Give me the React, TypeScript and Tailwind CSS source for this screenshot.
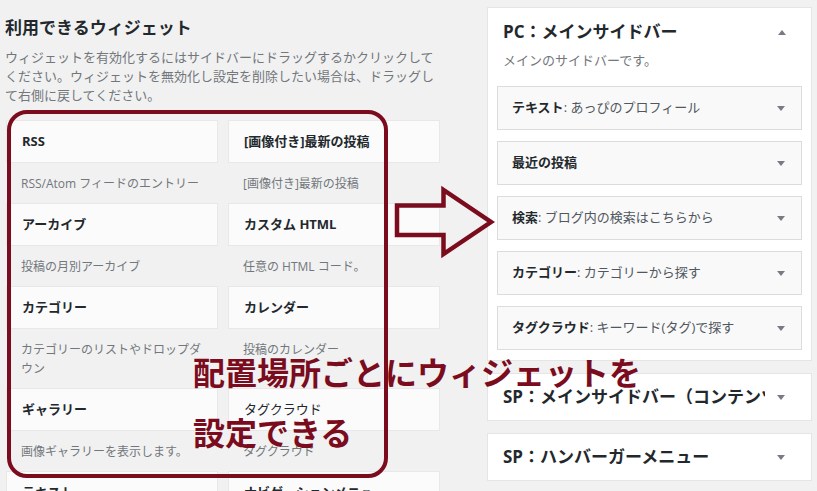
import React from "react";

type Widget = { title: string; desc: string[]; light?: boolean };

const widgets: Widget[] = [
  { title: "RSS", desc: ["RSS/Atom フィードのエントリー"] },
  { title: "[画像付き]最新の投稿", desc: ["[画像付き]最新の投稿"] },
  { title: "アーカイブ", desc: ["投稿の月別アーカイブ"] },
  { title: "カスタム HTML", desc: ["任意の HTML コード。"] },
  { title: "カテゴリー", desc: ["カテゴリーのリストやドロップダ", "ウン"] },
  { title: "カレンダー", desc: ["投稿のカレンダー"] },
  { title: "ギャラリー", desc: ["画像ギャラリーを表示します。"] },
  { title: "タグクラウド", desc: ["タグクラウド"], light: true },
  { title: "テキスト", desc: ["任意のテキスト。"] },
  { title: "ナビゲーションメニュー", desc: ["サイドバーにナビゲーションメニューを追加します。"] },
];

const sidebarItems = [
  { name: "テキスト", label: "あっぴのプロフィール" },
  { name: "最近の投稿", label: "" },
  { name: "検索", label: "ブログ内の検索はこちらから" },
  { name: "カテゴリー", label: "カテゴリーから探す" },
  { name: "タグクラウド", label: "キーワード(タグ)で探す" },
];

const Tri = ({ up = false }: { up?: boolean }) => (
  <svg width="8" height="5" viewBox="0 0 8 5" className="shrink-0">
    <polygon points={up ? "0,5 8,5 4,0" : "0,0 8,0 4,5"} fill="#787c82" />
  </svg>
);

const WidgetCard = ({ w }: { w: Widget }) => (
  <div className="flex flex-col">
    <div
      className={`flex h-[43px] items-center border border-[#e8e8e8] bg-[#fbfbfb] px-[15px] text-[13px] ${
        w.light ? "font-normal" : "font-bold"
      }`}
    >
      {w.title}
    </div>
    <div className="px-[15px] pt-[11px] pb-[10px] text-[12px] leading-[19px] text-[#72777c] whitespace-nowrap">
      {w.desc.map((line) => (
        <div key={line}>{line}</div>
      ))}
    </div>
  </div>
);

export default function App() {
  return (
    <div className="relative h-[491px] w-[817px] overflow-hidden bg-[#f1f1f1] font-['Open_Sans','Noto_Sans_CJK_JP',sans-serif] text-[#23282d]">
      <div className="flex">
        {/* available widgets */}
        <div className="w-[442px] shrink-0 pl-[5px] pt-[16px]">
          <h2 className="text-[17px] font-bold leading-[24px]">利用できるウィジェット</h2>
          <p className="mt-[8px] whitespace-nowrap text-[13px] leading-[19px] text-[#72777c]">
            ウィジェットを有効化するにはサイドバーにドラッグするかクリックして
            <br />
            ください。ウィジェットを無効化し設定を削除したい場合は、ドラッグし
            <br />
            て右側に戻してください。
          </p>
          <div className="mt-[15px] ml-[1px] grid grid-cols-[212px_212px] gap-x-[10px]">
            {widgets.map((w) => (
              <WidgetCard key={w.title} w={w} />
            ))}
          </div>
        </div>

        {/* sidebars */}
        <div className="ml-[45px] mt-[7px] w-[325px] shrink-0">
          <div className="border border-[#e5e5e5] bg-white px-[9px] pb-[10px]">
            <div className="flex items-center justify-between pt-[12px] pl-[6px] pr-[16px]">
              <h2 className="text-[17px] font-bold leading-[24px]">PC：メインサイドバー</h2>
              <Tri up />
            </div>
            <p className="mt-[7px] pl-[6px] text-[13px] leading-[19px] text-[#72777c]">
              メインのサイドバーです。
            </p>
            <div className="mt-[16px] flex flex-col gap-[11px]">
              {sidebarItems.map((item) => (
                <div
                  key={item.name}
                  className="flex h-[44px] items-center justify-between border border-[#dcdcde] bg-[#f9f9f9] pl-[14px] pr-[16px] text-[13px]"
                >
                  <span>
                    <span className="font-bold">{item.name}</span>
                    {item.label && <span className="text-[#50575e]">: {item.label}</span>}
                  </span>
                  <Tri />
                </div>
              ))}
            </div>
          </div>

          <div className="mt-[12px] flex h-[48px] items-center justify-between border border-[#e5e5e5] bg-white pl-[15px] pr-[26px]">
            <h2 className="w-[262px] overflow-hidden whitespace-nowrap text-[17px] font-bold">
              SP：メインサイドバー（コンテンツ下）
            </h2>
            <Tri />
          </div>
          <div className="mt-[12px] flex h-[48px] items-center justify-between border border-[#e5e5e5] bg-white pl-[15px] pr-[26px]">
            <h2 className="text-[17px] font-bold">SP：ハンバーガーメニュー</h2>
            <Tri />
          </div>
        </div>
      </div>

      {/* annotation overlays */}
      <div className="absolute left-[7px] top-[110px] h-[368px] w-[381px] rounded-[20px] border-[4px] border-[#7b0c1e]" />
      <svg className="absolute left-0 top-0" width="817" height="491" viewBox="0 0 817 491">
        <polygon
          points="397,205.5 443.5,205.5 443.5,190 491,222 443.5,254 443.5,235 397,235"
          fill="none"
          stroke="#7b0c1e"
          strokeWidth="4.5"
          strokeLinejoin="miter"
        />
      </svg>
      <div className="absolute left-[193px] top-[343px] whitespace-nowrap text-[32px] font-bold leading-[60px] text-[#7b0c1e]">
        配置場所ごとにウィジェットを
        <br />
        設定できる
      </div>
    </div>
  );
}
